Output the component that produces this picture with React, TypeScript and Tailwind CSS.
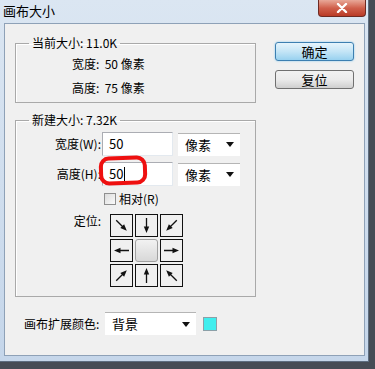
import React from 'react';

const FONT = "'Noto Sans CJK SC', 'Liberation Sans', sans-serif";

// rotation for each cell of the anchor grid (base arrow points down), null = centre
const arrows: (string | null)[] = [
  '-rotate-45',
  'rotate-0',
  'rotate-45',
  'rotate-90',
  null,
  '-rotate-90',
  '-rotate-[135deg]',
  'rotate-180',
  'rotate-[135deg]',
];

const Arrow = ({ rot }: { rot: string }) => (
  <svg width="21" height="21" viewBox="0 0 21 21" className={rot}>
    <line x1="10.5" y1="3" x2="10.5" y2="13" stroke="#111" strokeWidth="1.3" />
    <polygon points="7.8,11.5 13.2,11.5 10.5,18" fill="#111" />
  </svg>
);

const TextBox = ({ value, caret }: { value: string; caret?: boolean }) => (
  <div className="w-[71px] h-[24px] bg-white border border-[#abadb3] border-r-[#e3e9ef] border-b-[#e3e9ef] flex items-center pl-[6px] text-[13px]">
    {value}
    {caret && <span className="w-px h-[14px] bg-black ml-px" />}
  </div>
);

const Select = ({ label, width }: { label: string; width: string }) => (
  <div className={`${width} h-[23px] bg-white border-t border-[#b5b5b5] flex items-center justify-between pl-[7px] pr-[6px] text-[13px]`}>
    <span>{label}</span>
    <svg width="8" height="5" viewBox="0 0 8 5">
      <polygon points="0,0 8,0 4,5" fill="#111" />
    </svg>
  </div>
);

export default function App() {
  return (
    <div className="w-[375px] h-[369px] bg-[#464c55] overflow-hidden text-black" style={{ fontFamily: FONT }}>
      <div className="w-[369px] h-[362px] flex flex-col bg-gradient-to-b from-[#dbe6f2] to-[#c5d6ea] border-r border-b border-[#5d6d80]">
        {/* title bar */}
        <div className="h-[23px] flex justify-between pl-[3px] pr-[2px] shrink-0">
          <span className="text-[13px] leading-[22px]">画布大小</span>
          <div className="w-[48px] h-[17px] rounded-b-[4px] border border-t-0 border-[#6e2a22] bg-gradient-to-b from-[#e8a898] via-[#d0604c] to-[#b93a26] flex items-center justify-center">
            <svg width="12" height="10" viewBox="0 0 12 10">
              <path d="M2 1 L10 9 M10 1 L2 9" stroke="#fff" strokeWidth="2.4" strokeLinecap="round" />
            </svg>
          </div>
        </div>

        {/* client area */}
        <div className="flex-1 ml-[4px] mr-[3px] mb-[5px] bg-[#f0f0f0] border border-[#8ea1b7] flex pl-[10px] pt-[12px]">
          <div className="w-[241px] flex flex-col">
            <fieldset className="border border-[#a9a9a9] shadow-[inset_1px_1px_0_#fff] pt-[2px] pb-[2px]">
              <legend className="ml-[13px] px-[3px] text-[12px] leading-[14px]">当前大小: 11.0K</legend>
              <div className="pl-[56px] text-[12px]">
                <div className="h-[24px] flex items-center">宽度:&nbsp;&nbsp;50 像素</div>
                <div className="h-[24px] flex items-center">高度:&nbsp;&nbsp;75 像素</div>
              </div>
            </fieldset>

            <fieldset className="mt-[10px] border border-[#a9a9a9] shadow-[inset_1px_1px_0_#fff] pt-[5px] pb-[9px] flex flex-col text-[12px]">
              <legend className="ml-[13px] px-[3px] text-[12px] leading-[14px]">新建大小: 7.32K</legend>
              <div className="flex items-center h-[24px]">
                <span className="w-[86px] text-right pr-[1px]">宽度(W):</span>
                <TextBox value="50" />
                <div className="ml-[5px]">
                  <Select label="像素" width="w-[62px]" />
                </div>
              </div>
              <div className="flex items-center h-[24px] mt-[6px]">
                <span className="w-[86px] text-right pr-[1px]">高度(H):</span>
                <div className="relative">
                  <TextBox value="50" caret />
                  <div className="absolute left-[-3px] top-[-6px] w-[48px] h-[29px] border-[4px] border-[#ee1010] rounded-[10px] -rotate-2" />
                </div>
                <div className="ml-[5px]">
                  <Select label="像素" width="w-[62px]" />
                </div>
              </div>
              <div className="flex items-center h-[13px] mt-[6px] ml-[88px]">
                <div className="w-[12px] h-[12px] border border-[#8f8f8f] bg-gradient-to-br from-[#dcdcdc] to-[#fafafa]" />
                <span className="ml-[3px]">相对(R)</span>
              </div>
              <div className="flex items-start mt-[9px]">
                <span className="w-[85px] text-right leading-[14px]">定位:</span>
                <div className="ml-[9px] grid grid-cols-[repeat(3,23px)] grid-rows-[repeat(3,23px)] gap-[2px]">
                  {arrows.map((rot, i) =>
                    rot === null ? (
                      <div key={i} className="rounded-[3px] border border-[#a0a0a0] bg-gradient-to-b from-[#f2f2f2] to-[#d8d8d8]" />
                    ) : (
                      <div key={i} className="border border-[#111] bg-[#f0f0f0] flex items-center justify-center">
                        <Arrow rot={rot} />
                      </div>
                    )
                  )}
                </div>
              </div>
            </fieldset>

            <div className="flex items-center mt-[15px] ml-[9px] text-[12px]">
              <span className="w-[81px] whitespace-nowrap">画布扩展颜色:</span>
              <Select label="背景" width="w-[91px]" />
              <div className="ml-[7px] w-[14px] h-[14px] bg-[#40eeee] border border-[#8ca0a8]" />
            </div>
          </div>

          <div className="ml-[19px] pt-[6px] flex flex-col gap-[9px]">
            <button className="w-[79px] h-[19px] rounded-[3px] border border-[#3c7fb1] bg-gradient-to-b from-[#e5f4fc] via-[#c4e5f6] to-[#98d1ef] shadow-[0_0_2px_#7cc7f0] text-[13px] leading-[17px]">
              确定
            </button>
            <button className="w-[79px] h-[19px] rounded-[3px] border border-[#707070] bg-gradient-to-b from-[#f2f2f2] via-[#ebebeb] to-[#cfcfcf] text-[13px] leading-[17px]">
              复位
            </button>
          </div>
        </div>
      </div>
    </div>
  );
}
